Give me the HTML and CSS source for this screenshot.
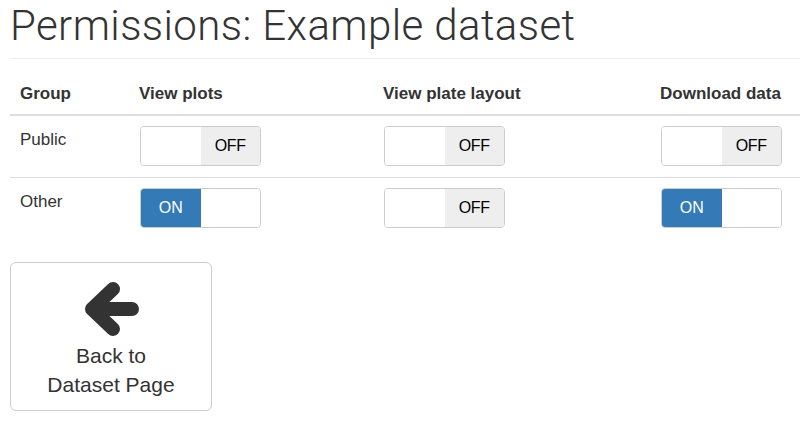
FILE: index.html
```html
<!DOCTYPE html>
<html>
<head>
<meta charset="utf-8">
<link rel="stylesheet" href="styles.css">
</head>
<body>
<div class="container">
  <div class="page-header">
    <h1>Permissions: Example dataset</h1>
  </div>
  <table class="perm-table">
    <colgroup>
      <col class="c1"><col class="c2"><col class="c3"><col class="c4">
    </colgroup>
    <thead>
      <tr><th>Group</th><th>View plots</th><th>View plate layout</th><th>Download data</th></tr>
    </thead>
    <tbody>
      <tr>
        <td class="group">Public</td>
        <td><div class="switch off"><span class="blank"></span><span class="lbl-off">OFF</span></div></td>
        <td><div class="switch off"><span class="blank"></span><span class="lbl-off">OFF</span></div></td>
        <td><div class="switch off"><span class="blank"></span><span class="lbl-off">OFF</span></div></td>
      </tr>
      <tr class="last">
        <td class="group">Other</td>
        <td><div class="switch on"><span class="lbl-on">ON</span><span class="blank"></span></div></td>
        <td><div class="switch off"><span class="blank"></span><span class="lbl-off">OFF</span></div></td>
        <td><div class="switch on"><span class="lbl-on">ON</span><span class="blank"></span></div></td>
      </tr>
    </tbody>
  </table>
  <a class="back-btn" href="#">
    <svg class="arrow" width="62" height="62" viewBox="0 0 62 62">
      <path d="M33 10 L12 30 L33 50 M12 30 L52 30" fill="none" stroke="#333" stroke-width="14" stroke-linecap="round" stroke-linejoin="round"/>
    </svg>
    <span class="btn-text">Back to<br>Dataset Page</span>
  </a>
</div>
</body>
</html>
```
FILE: styles.css
```css
html, body {
  margin: 0;
  padding: 0;
  background: #fff;
}
body {
  font-family: "Liberation Sans", Arial, sans-serif;
  color: #333;
  font-size: 17px;
}
.container {
  padding-left: 10px;
}
.page-header {
  border-bottom: 1px solid #eee;
  padding-bottom: 10px;
}
.page-header h1 {
  margin: 4px 0 0 0;
  font-family: Roboto, "Liberation Sans", sans-serif;
  font-weight: 300;
  font-size: 42px;
  letter-spacing: 0.4px;
  line-height: 44px;
  color: #333;
}
.perm-table {
  width: 100%;
  border-collapse: collapse;
  table-layout: fixed;
  margin-top: 15px;
}
.c1 { width: 119px; }
.c2 { width: 244px; }
.c3 { width: 277px; }
.perm-table th {
  text-align: left;
  font-weight: bold;
  font-size: 17px;
  line-height: 24px;
  padding: 8px 10px;
  border-bottom: 2px solid #ddd;
}
.perm-table td {
  vertical-align: top;
  padding: 10px 10px 11px 10px;
  line-height: 24px;
  font-size: 17px;
  border-bottom: 1px solid #ddd;
}
.perm-table td.group {
  padding-top: 12px;
}
.perm-table tr.last td {
  border-bottom: none;
}
.switch {
  display: flex;
  width: 121px;
  height: 40px;
  margin-left: 1px;
  box-sizing: border-box;
  border: 1px solid #ccc;
  border-radius: 4px;
  overflow: hidden;
  font-size: 16px;
}
.switch span {
  flex: 1 1 0;
  display: flex;
  align-items: center;
  justify-content: center;
}
.lbl-off {
  background: #eee;
  color: #000;
  letter-spacing: -0.3px;
}
.lbl-on {
  background: #337ab7;
  color: #fff;
}
.blank {
  background: #fff;
}
.back-btn {
  display: flex;
  flex-direction: column;
  align-items: center;
  width: 202px;
  box-sizing: border-box;
  margin-top: 23px;
  border: 1px solid #ccc;
  border-radius: 6px;
  padding: 16px 0 11px 0;
  text-decoration: none;
  color: #333;
}
.arrow {
  display: block;
}
.btn-text {
  display: block;
  text-align: center;
  font-size: 21px;
  line-height: 29px;
}
```
